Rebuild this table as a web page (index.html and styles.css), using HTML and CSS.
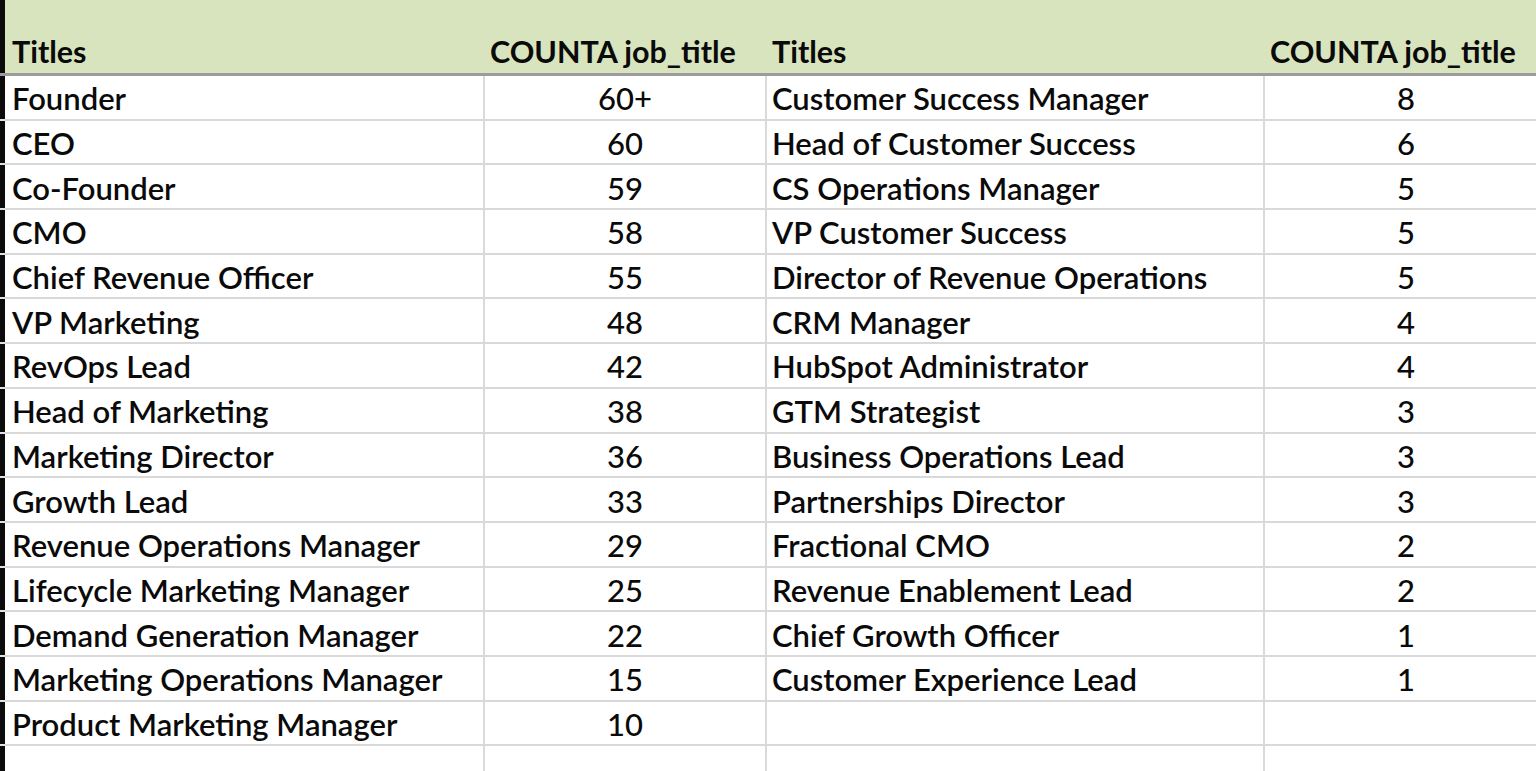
FILE: index.html
```html
<!DOCTYPE html>
<html>
<head>
<meta charset="utf-8">
<link rel="stylesheet" href="styles.css">
</head>
<body>
<div class="sheet">
  <div class="gut head"></div>
  <div class="hc">Titles</div>
  <div class="hc">COUNTA job_title</div>
  <div class="hc">Titles</div>
  <div class="hc">COUNTA job_title</div>

  <div class="gut"></div><div class="c t">Founder</div><div class="c n">60+</div><div class="c t">Customer Success Manager</div><div class="c n">8</div>
  <div class="gut"></div><div class="c t">CEO</div><div class="c n">60</div><div class="c t">Head of Customer Success</div><div class="c n">6</div>
  <div class="gut"></div><div class="c t">Co-Founder</div><div class="c n">59</div><div class="c t">CS Operations Manager</div><div class="c n">5</div>
  <div class="gut"></div><div class="c t">CMO</div><div class="c n">58</div><div class="c t">VP Customer Success</div><div class="c n">5</div>
  <div class="gut"></div><div class="c t">Chief Revenue Officer</div><div class="c n">55</div><div class="c t">Director of Revenue Operations</div><div class="c n">5</div>
  <div class="gut"></div><div class="c t">VP Marketing</div><div class="c n">48</div><div class="c t">CRM Manager</div><div class="c n">4</div>
  <div class="gut"></div><div class="c t">RevOps Lead</div><div class="c n">42</div><div class="c t">HubSpot Administrator</div><div class="c n">4</div>
  <div class="gut"></div><div class="c t">Head of Marketing</div><div class="c n">38</div><div class="c t">GTM Strategist</div><div class="c n">3</div>
  <div class="gut"></div><div class="c t">Marketing Director</div><div class="c n">36</div><div class="c t">Business Operations Lead</div><div class="c n">3</div>
  <div class="gut"></div><div class="c t">Growth Lead</div><div class="c n">33</div><div class="c t">Partnerships Director</div><div class="c n">3</div>
  <div class="gut"></div><div class="c t">Revenue Operations Manager</div><div class="c n">29</div><div class="c t">Fractional CMO</div><div class="c n">2</div>
  <div class="gut"></div><div class="c t">Lifecycle Marketing Manager</div><div class="c n">25</div><div class="c t">Revenue Enablement Lead</div><div class="c n">2</div>
  <div class="gut"></div><div class="c t">Demand Generation Manager</div><div class="c n">22</div><div class="c t">Chief Growth Officer</div><div class="c n">1</div>
  <div class="gut"></div><div class="c t">Marketing Operations Manager</div><div class="c n">15</div><div class="c t">Customer Experience Lead</div><div class="c n">1</div>
  <div class="gut"></div><div class="c t">Product Marketing Manager</div><div class="c n">10</div><div class="c t"></div><div class="c n"></div>
  <div class="gut"></div><div class="c t"></div><div class="c n"></div><div class="c t"></div><div class="c n"></div>
</div>
</body>
</html>
```
FILE: styles.css
```css
html, body {
  margin: 0;
  padding: 0;
  background: #ffffff;
}
body {
  width: 1536px;
  height: 771px;
  overflow: hidden;
}
.sheet {
  display: grid;
  grid-template-columns: 5px 478px 282px 498px 284px;
  grid-template-rows: 76px repeat(16, 44.7px);
  width: 1547px;
  font-family: Lato, "Liberation Sans", sans-serif;
  font-size: 31px;
  font-weight: 600;
  color: #0a0a0a;
}
.gut {
  background: #0b0b0b;
  border-bottom: 2px solid #e2e2e2;
}
.gut.head {
  border-bottom: 3px solid #9c9c9c;
}
.hc {
  background: #d8e4bd;
  border-bottom: 3px solid #9c9c9c;
  font-weight: 700;
  font-size: 30.5px;
  display: flex;
  align-items: flex-end;
  padding: 0 6px 4px 7px;
  white-space: nowrap;
}
.c {
  border-bottom: 2px solid #d9d9d9;
  border-left: 2px solid #dadada;
  display: flex;
  align-items: center;
  white-space: nowrap;
  padding-top: 2px;
}
.t {
  padding-left: 5px;
}
.n {
  justify-content: center;
  font-weight: 500;
}
.gut + .t {
  border-left: none;
  padding-left: 7px;
}
```
